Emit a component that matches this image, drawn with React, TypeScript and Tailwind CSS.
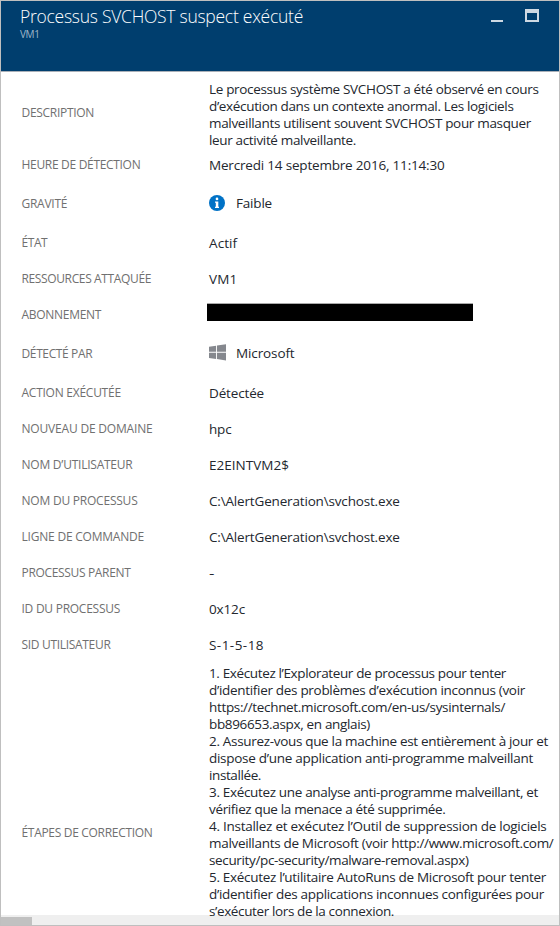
import type { ReactNode } from 'react';

type Line = { text: string; track: string };

type RowProps = {
  label: string;
  track: string;
  height?: string;
  children: ReactNode;
};

function Row({ label, track, height = 'h-9', children }: RowProps) {
  return (
    <div className={`flex shrink-0 items-center ${height}`}>
      <div className={`w-[187.5px] shrink-0 whitespace-nowrap text-[12px] leading-4 text-[#707070] ${track}`}>{label}</div>
      <div className="shrink-0 whitespace-nowrap text-[13.5px] leading-[17px] text-[#23272e]">{children}</div>
    </div>
  );
}

function Lines({ lines }: { lines: Line[] }) {
  return (
    <>
      {lines.map((line) => (
        <div key={line.text} className={line.track}>
          {line.text}
        </div>
      ))}
    </>
  );
}

const description: Line[] = [
  { text: 'Le processus système SVCHOST a été observé en cours', track: 'tracking-[-0.322px]' },
  { text: 'd’exécution dans un contexte anormal. Les logiciels', track: 'tracking-[-0.342px]' },
  { text: 'malveillants utilisent souvent SVCHOST pour masquer', track: 'tracking-[-0.327px]' },
  { text: 'leur activité malveillante.', track: 'tracking-[-0.341px]' },
];

const steps: Line[] = [
  { text: '1. Exécutez l’Explorateur de processus pour tenter', track: 'tracking-[-0.366px]' },
  { text: 'd’identifier des problèmes d’exécution inconnus (voir', track: 'tracking-[-0.307px]' },
  { text: 'https://technet.microsoft.com/en-us/sysinternals/', track: 'tracking-[-0.338px]' },
  { text: 'bb896653.aspx, en anglais)', track: 'tracking-[-0.34px]' },
  { text: '2. Assurez-vous que la machine est entièrement à jour et', track: 'tracking-[-0.319px]' },
  { text: 'dispose d’une application anti-programme malveillant', track: 'tracking-[-0.276px]' },
  { text: 'installée.', track: 'tracking-[-0.396px]' },
  { text: '3. Exécutez une analyse anti-programme malveillant, et', track: 'tracking-[-0.336px]' },
  { text: 'vérifiez que la menace a été supprimée.', track: 'tracking-[-0.344px]' },
  { text: '4. Installez et exécutez l’Outil de suppression de logiciels', track: 'tracking-[-0.263px]' },
  { text: 'malveillants de Microsoft (voir http://www.microsoft.com/', track: 'tracking-[-0.311px]' },
  { text: 'security/pc-security/malware-removal.aspx)', track: 'tracking-[-0.356px]' },
  { text: '5. Exécutez l’utilitaire AutoRuns de Microsoft pour tenter', track: 'tracking-[-0.302px]' },
  { text: 'd’identifier des applications inconnues configurées pour', track: 'tracking-[-0.301px]' },
  { text: 's’exécuter lors de la connexion.', track: 'tracking-[-0.375px]' },
];

function InfoIcon() {
  return (
    <svg width="16" height="16" viewBox="0 0 16 16" className="block">
      <circle cx="8" cy="8" r="8" fill="#0072c6" />
      <circle cx="8" cy="3.9" r="1.35" fill="#fff" />
      <path d="M6 6.4h3.3v5.3H10V13H6v-1.3h.8V7.7H6z" fill="#fff" />
    </svg>
  );
}

function WindowsIcon() {
  return (
    <svg width="17" height="17" viewBox="0 0 17 17" className="block" fill="#85888e">
      <path d="M0 2.8 7.1 1.7v6.1H0zM8 1.6 17 .2v7.6H8zM0 8.7h7.1v6.2L0 13.9zM8 8.7h9v7.8l-9-1.4z" />
    </svg>
  );
}

export default function App() {
  return (
    <div className="flex h-[926px] w-[560px] flex-col overflow-hidden border border-[#bfbfbf] bg-white font-['Open_Sans','Noto_Sans',sans-serif]">
      <header className="flex h-[71px] shrink-0 items-start justify-between border-b border-[#aab0b8] bg-[#003e6e] pl-[19px] pr-[20px]">
        <div className="whitespace-nowrap">
          <h1 className="pt-[3px] text-[17.5px] font-light leading-6 tracking-[-0.265px] text-white">
            Processus SVCHOST suspect exécuté
          </h1>
          <div className="text-[10px] font-medium leading-[13px] tracking-[-0.4px] text-[#9fb6ca]">VM1</div>
        </div>
        <div className="flex items-start gap-[22px] pt-[8px]">
          <div className="mt-[11px] h-[2px] w-[12px] bg-[#ced9e3]" />
          <div className="h-[13px] w-[14px] border-2 border-t-4 border-[#ced9e3]" />
        </div>
      </header>

      <main className="relative -mb-2 flex min-h-0 flex-1 flex-col overflow-hidden pl-[20.5px] pt-[6px]">
        <Row label="DESCRIPTION" track="tracking-[-0.302px]" height="h-[69px]">
          <div className="mt-[5px]">
            <Lines lines={description} />
          </div>
        </Row>
        <Row label="HEURE DE DÉTECTION" track="tracking-[-0.313px]">
          <span className="tracking-[-0.187px]">Mercredi 14 septembre 2016, 11:14:30</span>
        </Row>
        <Row label="GRAVITÉ" track="tracking-[-0.266px]" height="h-[42px]">
          <div className="mb-[2px] flex items-center gap-[11px]">
            <div className="pb-px">
              <InfoIcon />
            </div>
            <span className="tracking-[-0.188px]">Faible</span>
          </div>
        </Row>
        <Row label="ÉTAT" track="tracking-[-0.45px]">
          <span className="tracking-[0.1px]">Actif</span>
        </Row>
        <Row label="RESSOURCES ATTAQUÉE" track="tracking-[-0.366px]">
          <span className="tracking-[0.15px]">VM1</span>
        </Row>
        <Row label="ABONNEMENT" track="tracking-[-0.282px]">
          <div className="-ml-[2px] mb-[6px] h-[18px] w-[266px] border-t border-[#aaa] bg-black" />
        </Row>
        <Row label="DÉTECTÉ PAR" track="tracking-[-0.373px]" height="h-[42px]">
          <div className="mb-[2px] flex items-center gap-[10px]">
            <div className="-mt-[2px]">
              <WindowsIcon />
            </div>
            <span className="tracking-[-0.118px]">Microsoft</span>
          </div>
        </Row>
        <Row label="ACTION EXÉCUTÉE" track="tracking-[-0.254px]">
          <span className="tracking-[-0.151px]">Détectée</span>
        </Row>
        <Row label="NOUVEAU DE DOMAINE" track="tracking-[-0.187px]">
          <span className="tracking-[-0.168px]">hpc</span>
        </Row>
        <Row label="NOM D’UTILISATEUR" track="tracking-[-0.232px]">
          <span className="tracking-[0.028px]">E2EINTVM2$</span>
        </Row>
        <Row label="NOM DU PROCESSUS" track="tracking-[-0.22px]">
          <span className="tracking-[-0.169px]">C:\AlertGeneration\svchost.exe</span>
        </Row>
        <Row label="LIGNE DE COMMANDE" track="tracking-[-0.213px]">
          <span className="tracking-[-0.169px]">C:\AlertGeneration\svchost.exe</span>
        </Row>
        <Row label="PROCESSUS PARENT" track="tracking-[-0.332px]">
          <span className="inline-block origin-left scale-x-125">-</span>
        </Row>
        <Row label="ID DU PROCESSUS" track="tracking-[-0.261px]">
          <span className="tracking-[-0.138px]">0x12c</span>
        </Row>
        <Row label="SID UTILISATEUR" track="tracking-[-0.312px]">
          <span className="tracking-[0.461px]">S-1-5-18</span>
        </Row>
        <Row label="ÉTAPES DE CORRECTION" track="tracking-[-0.31px]" height="h-[340px]">
          <div className="h-[337px]">
            <Lines lines={steps} />
          </div>
        </Row>
      </main>

      <div className="flex h-[10px] shrink-0 items-end bg-[#efefef]">
        <div className="h-2 w-[31px] bg-[#c1c1c1]" />
      </div>
    </div>
  );
}
